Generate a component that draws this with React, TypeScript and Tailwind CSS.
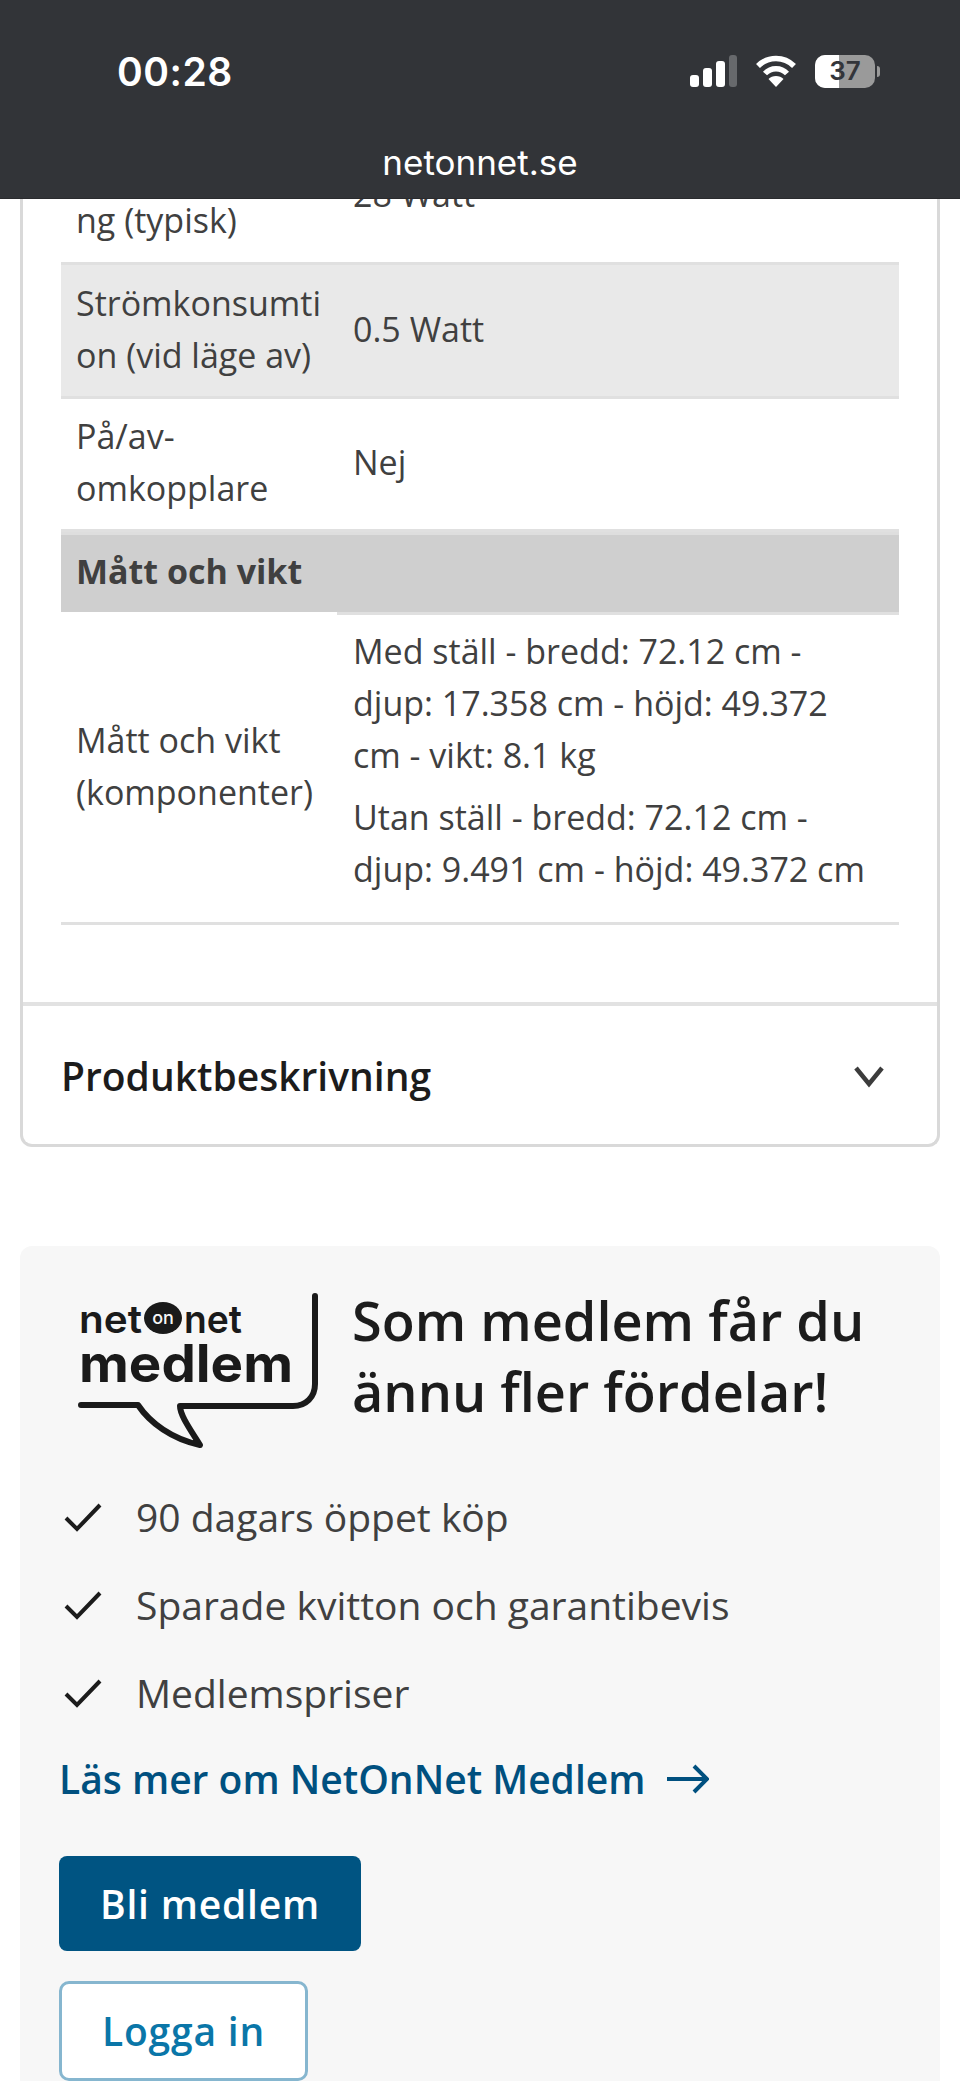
const F = "[font-family:'Open_Sans',sans-serif]";

function StatusBar() {
  return (
    <div className="relative z-10 h-[199px] bg-[#323438] border-b border-[#2a2b2e] text-white">
      <div className="flex items-center justify-between pl-[117px] pr-[80px] pt-[18px] h-[124px]">
        <span className="text-[39px] leading-none font-semibold [font-family:Inter,sans-serif] tracking-[0.5px]">00:28</span>
        <div className="flex items-center gap-[18px]">
          <svg width="47" height="32" viewBox="0 0 47 32">
            <rect x="0" y="20" width="9" height="12" rx="3" fill="#fff" />
            <rect x="13" y="13" width="9" height="19" rx="3" fill="#fff" />
            <rect x="26" y="6" width="9" height="26" rx="3" fill="#fff" />
            <rect x="39" y="0" width="8" height="32" rx="3" fill="#67696c" />
          </svg>
          <svg width="42" height="32" viewBox="0 0 42 32" fill="none">
            <path d="M3 11 C13 1 29 1 39 11" stroke="#fff" strokeWidth="5.5" />
            <path d="M10 18.5 C16 12 26 12 32 18.5" stroke="#fff" strokeWidth="5.5" />
            <path d="M21 32 L13.5 24 C17 20 25 20 28.500 24 Z" fill="#fff" />
          </svg>
          <div className="flex items-center">
            <div className="relative flex h-[33px] w-[60px] items-center justify-center overflow-hidden rounded-[10px] bg-[#9a9a9a]">
              <div className="absolute inset-y-0 left-0 w-[24px] bg-white" />
              <span className="relative text-[26px] leading-none font-semibold text-[#33353a] [font-family:Inter,sans-serif]">37</span>
            </div>
            <div className="ml-[2px] h-[11px] w-[3px] rounded-r-full bg-[#9a9a9a]" />
          </div>
        </div>
      </div>
      <div className="pt-[16px] text-center text-[35px] leading-[44px] [font-family:Inter,sans-serif]">netonnet.se</div>
    </div>
  );
}

function Row({ label, children, gray, h }: { label: React.ReactNode; children: React.ReactNode; gray?: boolean; h: string }) {
  return (
    <div className={`flex items-center pb-[4px] ${h} ${gray ? "bg-[#e9e9e9]" : "bg-white"} border-b-[3px] border-[#e0e0e0]`}>
      <div className="w-[276px] shrink-0 pl-[15px] pr-[10px] break-all">{label}</div>
      <div className="flex-1 pl-[16px] pr-[16px]">{children}</div>
    </div>
  );
}

function Check() {
  return (
    <svg width="38" height="30" viewBox="0 0 38 30" fill="none" className="shrink-0">
      <path d="M2 16 L13 27 L36 3" stroke="#1c1c1c" strokeWidth="4" />
    </svg>
  );
}

function Logo() {
  return (
    <svg width="260" height="170" viewBox="0 0 260 170" fill="none" className="ml-[11px] shrink-0 -mt-[1px]">
      <text x="9" y="47" fontFamily="Inter, sans-serif" fontWeight="600" fontSize="39" fill="#1a1a1a" textLength="63" lengthAdjust="spacingAndGlyphs">net</text>
      <ellipse cx="93" cy="32" rx="19" ry="16" fill="#1a1a1a" />
      <text x="93" y="38" textAnchor="middle" fontFamily="Inter, sans-serif" fontWeight="500" fontSize="18" fill="#f7f7f7">on</text>
      <text x="114" y="47" fontFamily="Inter, sans-serif" fontWeight="600" fontSize="39" fill="#1a1a1a" textLength="58" lengthAdjust="spacingAndGlyphs">net</text>
      <text x="9" y="96" fontFamily="Inter, sans-serif" fontWeight="700" fontSize="52" fill="#1a1a1a" textLength="214" lengthAdjust="spacingAndGlyphs">medlem</text>
      <path d="M11 119 H68 C80 137 102 153 130 159 C120 143 110 129 110 120 H223 C236 120 245 111 245 98 V10" stroke="#1a1a1a" strokeWidth="6" strokeLinecap="round" strokeLinejoin="round" />
    </svg>
  );
}

export default function App() {
  return (
    <div className={`${F} relative h-[2081px] w-[960px] overflow-hidden bg-white text-[34px] leading-[52px] text-[#404040]`}>
      <StatusBar />
      <div className="px-[20px]">
        <div className="-mt-[69px] h-[1017px] rounded-b-[12px] border-x-[3px] border-b-[3px] border-[#d9d9d9] bg-white">
          <div className="mx-[38px]">
            <Row h="h-[135px]" label={<>&nbsp;<br />ng (typisk)</>}>28 Watt</Row>
            <Row gray h="h-[134px]" label="Strömkonsumti on (vid läge av)">0.5 Watt</Row>
            <Row h="h-[133px]" label={<>På/av-<br />omkopplare</>}>Nej</Row>
            <div className="flex h-[80px] items-center bg-[#cfcfcf] border-t-[3px] border-[#dedede] pb-[5px] pl-[15px] font-bold">Mått och vikt</div>
            <div className="flex h-[313px] items-center border-b-[3px] border-[#e0e0e0]">
              <div className="w-[276px] shrink-0 pb-[2px] pl-[15px]">Mått och vikt (komponenter)</div>
              <div className="flex-1 self-stretch border-t-[3px] border-[#e0e0e0] pl-[16px] pr-[18px] pt-[10px]">
                <p>Med ställ - bredd: 72.12 cm - djup: 17.358 cm - höjd: 49.372 cm - vikt: 8.1 kg</p>
                <p className="mt-[10px]">Utan ställ - bredd: 72.12 cm - djup: 9.491 cm - höjd: 49.372 cm</p>
              </div>
            </div>
          </div>
          <div className="mt-[77px] flex h-[143px] items-center justify-between border-t-[4px] border-[#e2e2e2] pl-[38px] pr-[52px]">
            <span className="text-[39px] font-semibold text-[#1c1c1c]">Produktbeskrivning</span>
            <svg width="32" height="24" viewBox="0 0 32 24" fill="none">
              <path d="M3 4 L16 20 L29 4" stroke="#3c3c3c" strokeWidth="4.500" />
            </svg>
          </div>
        </div>
        <div className="mt-[99px] h-[900px] rounded-[12px] bg-[#f7f7f7] pt-[41px] pl-[39px]">
          <div className="flex items-start">
            <Logo />
            <h2 className="-mt-[2px] pl-[22px] text-[54px] leading-[71px] font-semibold text-[#1c1c1c]">Som medlem får du<br />ännu fler fördelar!</h2>
          </div>
          <ul className="mt-[34px] flex flex-col gap-[35px] text-[39px] leading-[53px]">
            <li className="flex items-center gap-[34px] pl-[5px]"><Check />90 dagars öppet köp</li>
            <li className="flex items-center gap-[34px] pl-[5px]"><Check />Sparade kvitton och garantibevis</li>
            <li className="flex items-center gap-[34px] pl-[5px]"><Check />Medlemspriser</li>
          </ul>
          <div className="mt-[33px] flex items-center gap-[22px] text-[39px] leading-[54px] font-semibold text-[#00507f]">
            <span>Läs mer om NetOnNet Medlem</span>
            <svg width="42" height="30" viewBox="0 0 42 30" fill="none">
              <path d="M0 15 H40 M27 2 L40 15 L27 28" stroke="#00507f" strokeWidth="4" />
            </svg>
          </div>
          <button className="mt-[50px] block h-[95px] w-[302px] rounded-[8px] bg-[#005482] text-center text-[39px] font-semibold tracking-[0.8px] text-white">Bli medlem</button>
          <button className="mt-[30px] block h-[100px] w-[249px] rounded-[10px] border-[3px] border-[#86b6cf] bg-white text-center text-[39px] font-semibold tracking-[0.8px] text-[#0a76a8]">Logga in</button>
        </div>
      </div>
    </div>
  );
}
